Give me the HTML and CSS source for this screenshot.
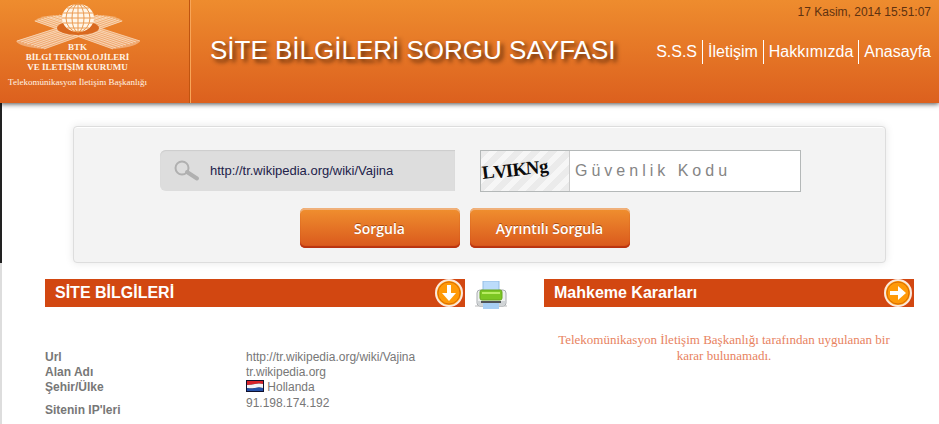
FILE: index.html
```html
<!DOCTYPE html>
<html lang="tr">
<head>
    <meta charset="UTF-8">
    <meta name="viewport" content="width=device-width, initial-scale=1">
    <title>Site Bilgileri Sorgu Sayfası</title>
    <link rel="stylesheet" href="styles.css">
</head>
<body>
    <header class="header">
        <div class="logo">
            <svg class="logo-globe" width="128" height="50" viewBox="13 0 128 50" aria-hidden="true">
                <g fill="#fff3e4" opacity=".4">
                    <path d="M33 21Q40 15 58 15L139 41Q136 47 112 49Z"/>
                    <path d="M122 21Q115 15 97 15L15 41Q18 47 43 49Z"/>
                </g>
                <g stroke="#fff3e4" stroke-width="1" opacity=".6">
                    <path d="M34 21L112 49M37 20L115 48M40 19L119 47M43 18L122 46M46 17L125 45M49 17L129 44M52 16L132 43M55 16L135 42M58 15L139 41"/>
                    <path d="M121 21L43 49M118 20L40 48M115 19L36 47M112 18L33 46M109 17L30 45M106 17L26 44M103 16L23 43M100 16L20 42M97 15L16 41"/>
                </g>
                <ellipse cx="77" cy="28" rx="21" ry="7" fill="#d9691f"/>
                <ellipse cx="77" cy="18" rx="16" ry="14" fill="#fff6e8"/>
                <g fill="none" stroke="#eb9a50" stroke-width="1">
                    <path d="M77 4V32M62 13H92M61 18H93M62 23H92M66 8H88M66 28H88"/>
                    <ellipse cx="77" cy="18" rx="6" ry="14"/>
                    <ellipse cx="77" cy="18" rx="12" ry="14"/>
                </g>
            </svg>
            <div class="logo-name">BTK<br>BİLGİ TEKNOLOJİLERİ<br>VE İLETİŞİM KURUMU</div>
            <div class="logo-sub">Telekomünikasyon İletişim Başkanlığı</div>
        </div>
        <h1 class="title">SİTE BİLGİLERİ SORGU SAYFASI</h1>
        <div class="header-right">
            <div class="date">17 Kasim, 2014 15:51:07</div>
            <nav class="menu">
                <a href="#">S.S.S</a>
                <a href="#">İletişim</a>
                <a href="#">Hakkımızda</a>
                <a href="#">Anasayfa</a>
            </nav>
        </div>
    </header>

    <main class="page">
        <form class="query">
            <div class="fields">
                <label class="url-box">
                    <svg width="26" height="22" viewBox="0 0 26 22" fill="none" stroke="#b0b0b0" aria-hidden="true">
                        <circle cx="8" cy="8" r="6.500" stroke-width="2"/>
                        <path d="M13 12L23 18.500" stroke-width="4" stroke-linecap="round"/>
                    </svg>
                    <input class="url-input" type="text" aria-label="Url" value="http://tr.wikipedia.org/wiki/Vajina">
                </label>
                <div class="captcha">
                    <svg class="captcha-code" width="89" height="40" viewBox="0 0 89 40">
                        <g transform="rotate(-7 35 20)">
                            <text x="1" y="24">L</text>
                            <text x="13" y="25">V</text>
                            <text x="25" y="25">I</text>
                            <text x="32" y="25">K</text>
                            <text x="45" y="25" transform="rotate(4 50 26)">N</text>
                            <text x="59" y="25">g</text>
                        </g>
                    </svg>
                    <input class="code-input" type="text" aria-label="Güvenlik Kodu" placeholder="Güvenlik Kodu">
                </div>
            </div>
            <div class="buttons">
                <button class="btn" type="button">Sorgula</button>
                <button class="btn" type="button">Ayrıntılı Sorgula</button>
            </div>
        </form>

        <div class="results">
            <section class="site">
                <h2 class="bar">SİTE BİLGİLERİ
                    <svg width="30" height="28" viewBox="0 0 30 28" aria-hidden="true">
                        <circle cx="14" cy="14" r="13" fill="#ff9a08" stroke="#fbe9dc" stroke-width="2"/>
                        <circle cx="14" cy="14" r="11" fill="none" stroke="#d96c05" stroke-width="1"/>
                        <path d="M12 6H16V14H21L14 22L7 14H12Z" fill="#fff"/>
                    </svg>
                </h2>
                <table class="info">
                    <tr><th>Url</th><td>http://tr.wikipedia.org/wiki/Vajina</td></tr>
                    <tr><th>Alan Adı</th><td>tr.wikipedia.org</td></tr>
                    <tr>
                        <th>Şehir/Ülke</th>
                        <td>
                            <svg class="flag" width="18" height="12" viewBox="0 0 18 12" aria-hidden="true">
                                <path d="M0 0H18V12H0Z" fill="#10102c"/>
                                <path d="M1 1H17V4Q13 3 9 4T1 5Z" fill="#d8232a"/>
                                <path d="M1 5Q5 5 9 4T17 4V8Q13 7 9 8T1 8Z" fill="#f5f5f8"/>
                                <path d="M1 8Q5 9 9 8T17 8V11H1Z" fill="#2450a8"/>
                            </svg>
                            Hollanda
                        </td>
                    </tr>
                    <tr class="ip"><th>Sitenin IP'leri</th><td>91.198.174.192</td></tr>
                </table>
            </section>
            <button class="print" type="button" aria-label="Yazdır">
                <svg width="32" height="28" viewBox="0 0 32 28" aria-hidden="true">
                    <path d="M0 25H32" stroke="#ddd" stroke-width="2"/>
                    <rect x="2" y="9" width="29" height="16" rx="3" fill="#eef0f0" stroke="#a8acb0"/>
                    <path d="M3 20H30V23Q30 25 28 25H5Q3 25 3 23Z" fill="#d0d4d6"/>
                    <path d="M8 0H24V11H8Z" fill="#bcdcfa" stroke="#94bce4"/>
                    <rect x="5" y="9" width="22" height="10" rx="2" fill="#7cc623" stroke="#66a81c"/>
                    <path d="M7 12H25" stroke="#b8ec62" stroke-width="2"/>
                    <path d="M8 22H24V28H8Z" fill="#a8cff4"/>
                    <path d="M6 21H26" stroke="#505458" stroke-width="2"/>
                </svg>
            </button>
            <section class="court">
                <h2 class="bar">Mahkeme Kararları
                    <svg width="30" height="28" viewBox="0 0 30 28" aria-hidden="true">
                        <circle cx="14" cy="14" r="13" fill="#ff9a08" stroke="#fbe9dc" stroke-width="2"/>
                        <circle cx="14" cy="14" r="11" fill="none" stroke="#d96c05" stroke-width="1"/>
                        <path d="M6 12H14V7L22 14L14 21V16H6Z" fill="#fff"/>
                    </svg>
                </h2>
                <p class="notice">Telekomünikasyon İletişim Başkanlığı tarafından uygulanan bir karar bulunamadı.</p>
            </section>
        </div>
    </main>
</body>
</html>
```
FILE: styles.css
```css
* {
    box-sizing: border-box;
}
body {
    margin: 0;
    font-family: Arial, "Liberation Sans", sans-serif;
    font-size: 12px;
    color: #777;
    background: linear-gradient(#222 263px, #ddd 263px) no-repeat #ddd;
    min-height: 100vh;
    display: flex;
    flex-direction: column;
}

/* header */
.header {
    position: relative;
    display: flex;
    height: 103px;
    background: linear-gradient(#ee8c2e, #dc601e);
    box-shadow: 0 1px 5px rgba(0, 0, 0, 0.7);
}
.logo {
    display: flex;
    flex-direction: column;
    align-items: center;
    width: 190px;
    padding-right: 34px;
    border-right: 1px solid #c05410;
    box-shadow: 1px 0 0 #f8a558;
    color: #fff3e4;
    font-family: "Liberation Serif", serif;
    font-size: 9px;
    white-space: nowrap;
}
.logo-globe {
    margin-bottom: -8px;
}
.logo-name {
    position: relative;
    font-weight: bold;
    line-height: 10px;
    text-align: center;
}
.logo-sub {
    margin-top: 4px;
    line-height: 12px;
}
.title {
    margin: 34px 0 0 20px;
    color: #fff;
    font-size: 26px;
    font-weight: normal;
    line-height: 32px;
    text-shadow: 3px 3px 4px rgba(50, 20, 0, 0.8);
    white-space: nowrap;
}
.header-right {
    margin-left: auto;
    padding: 4px 8px 0 0;
    text-align: right;
}
.date {
    color: #5e3210;
    line-height: 16px;
}
.menu {
    display: flex;
    margin-top: 20px;
    font-size: 16px;
    line-height: 24px;
}
.menu a {
    padding: 0 5px;
    color: #fff;
    text-decoration: none;
}
.menu a + a {
    border-left: 1px solid #fff;
}
.menu a:last-child {
    padding-right: 0;
}

/* page */
.page {
    flex: 1;
    margin-left: 2px;
    padding: 23px 25px 0 43px;
    background: #fff;
}
.query {
    margin: 0 28px;
    padding: 23px 0 14px;
    background: #f3f3f3;
    border: 1px solid #ddd;
    border-radius: 4px;
    box-shadow: 0 0 8px rgba(0, 0, 0, 0.1), inset 0 1px 0 #fff;
}
.fields {
    display: flex;
    justify-content: center;
    gap: 25px;
    padding-left: 2px;
}
.url-box {
    display: flex;
    align-items: center;
    gap: 10px;
    width: 295px;
    height: 41px;
    padding-left: 14px;
    background: #ddd;
    border-radius: 6px 0 0 6px;
    box-shadow: inset 0 1px 1px #ccc;
}
.url-input {
    flex: 1;
    min-width: 0;
    padding: 0;
    border: 0;
    background: none;
    color: #22224a;
    font-family: inherit;
    font-size: 13px;
    outline: none;
}
.captcha {
    display: flex;
    height: 42px;
    border: 1px solid #b4b8b8;
    background: #fff;
}
.captcha-code {
    border-right: 1px solid #ccc;
    background: repeating-linear-gradient(135deg, #ebebeb 0 6px, #f6f6f6 6px 12px);
    font-family: "Liberation Serif", serif;
    font-size: 19px;
    font-weight: bold;
    fill: #0c0c0c;
}
.code-input {
    width: 230px;
    padding: 0 5px;
    border: 0;
    background: #fff;
    font-family: inherit;
    font-size: 16px;
    letter-spacing: 4px;
    outline: none;
}
.code-input::placeholder {
    color: #858585;
}
.buttons {
    display: flex;
    justify-content: center;
    gap: 10px;
    margin-top: 16px;
    padding-right: 30px;
}
.btn {
    width: 160px;
    height: 40px;
    padding: 0;
    border: 0;
    border-radius: 5px;
    background: linear-gradient(#f0902f, #d9571c);
    box-shadow: inset 0 2px 0 #f0b07a, inset 0 -2px 1px #b93210;
    color: #fff;
    font-family: "Open Sans", sans-serif;
    font-size: 14px;
    font-weight: 600;
    text-shadow: 0 -1px 0 #a84a12;
    cursor: pointer;
}

/* results */
.results {
    display: grid;
    grid-template-columns: 420fr 32px 417fr;
    align-items: start;
    margin-top: 16px;
}
.bar {
    display: flex;
    justify-content: space-between;
    align-items: center;
    height: 28px;
    margin: 0;
    padding-left: 10px;
    background: #d24711;
    color: #fff;
    font-size: 16px;
}
.print {
    margin: 2px 0 0 10px;
    padding: 0;
    border: 0;
    background: none;
    cursor: pointer;
}
.print svg {
    display: block;
}
.court {
    margin-left: 47px;
}
.info {
    width: 100%;
    margin-top: 43px;
    border-collapse: collapse;
    line-height: 15px;
}
.info th,
.info td {
    padding: 0;
    text-align: left;
    vertical-align: top;
}
.info th {
    width: 201px;
}
.info .ip th {
    padding-top: 8px;
}
.info .ip td {
    padding-top: 1px;
}
.flag {
    vertical-align: -1px;
}
.notice {
    margin: 25px 16px 0 6px;
    color: #e8835f;
    font-family: "Liberation Serif", serif;
    font-size: 13px;
    line-height: 16px;
    text-align: center;
}
```
